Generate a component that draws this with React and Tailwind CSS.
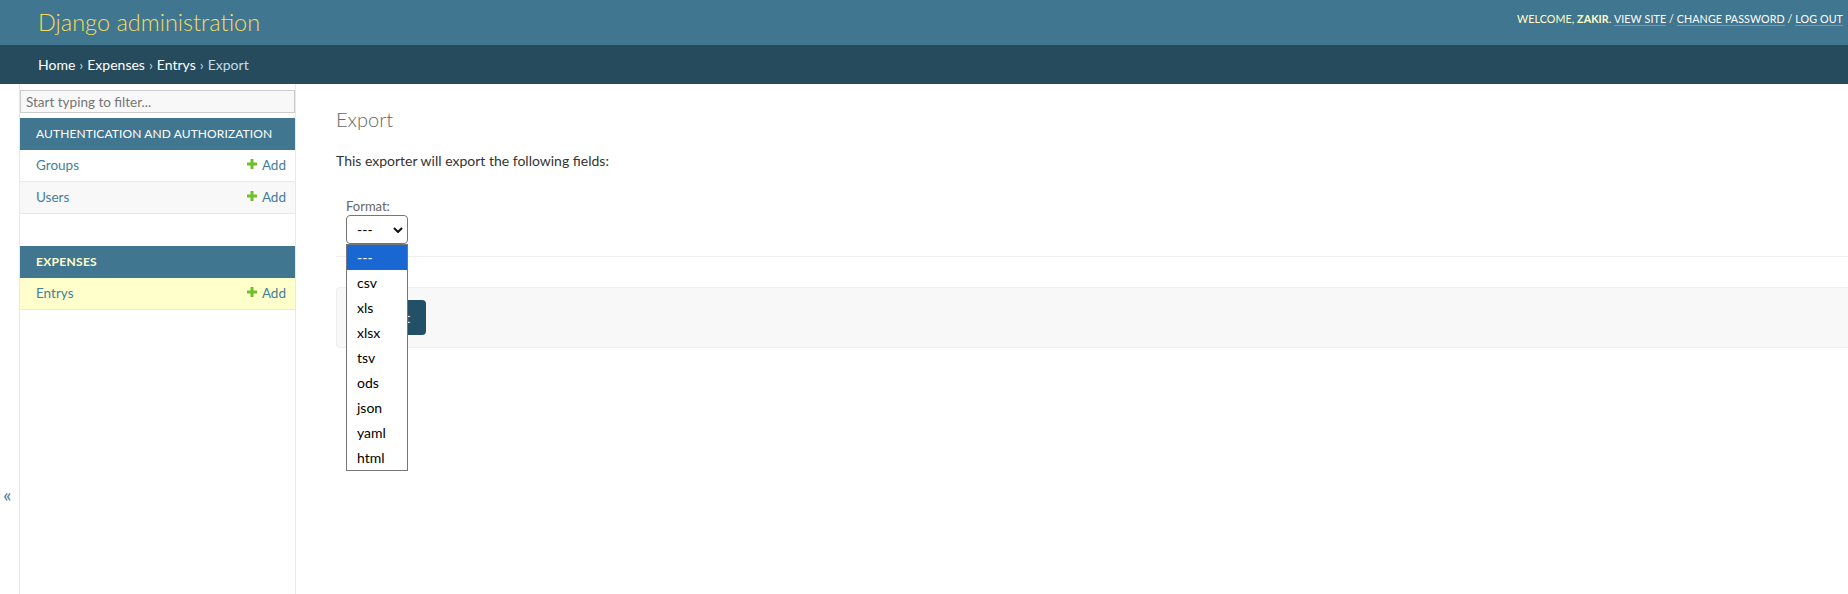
import { useState } from "react";

const formats = ["---", "csv", "xls", "xlsx", "tsv", "ods", "json", "yaml", "html"];

function PlusIcon() {
  return (
    <svg width="10" height="10" viewBox="0 0 10 10" className="mr-[5px] -mt-[3px]">
      <rect x="3.5" y="0" width="3" height="10" fill="#70bf2b" />
      <rect x="0" y="3.5" width="10" height="3" fill="#70bf2b" />
    </svg>
  );
}

function ModelRow({ name, current, even }) {
  return (
    <div
      className={`flex items-center justify-between h-[32px] pl-[16px] pr-[9px] border-b border-[#e8e8e8] text-[13.5px] ${
        current ? "bg-[#ffffcc]" : even ? "bg-[#f8f8f8]" : "bg-white"
      }`}
    >
      <a className="text-[#447e9b]">{name}</a>
      <a className="flex items-center text-[#447e9b]">
        <PlusIcon />
        Add
      </a>
    </div>
  );
}

function App() {
  const [selected] = useState("---");

  return (
    <div className="min-h-screen bg-white text-[#333] font-['Lato','Open_Sans',sans-serif] overflow-hidden">
      {/* Header */}
      <header className="flex items-center justify-between h-[45px] bg-[#417690] pl-[38px] pr-[5px]">
        <h1 className="text-[23.5px] font-light text-[#f5dd5d] leading-none">Django administration</h1>
        <div className="text-[10.7px] uppercase tracking-[0.1px] text-[#ffffcc] -mt-[6px] whitespace-nowrap">
          Welcome, <strong className="font-bold">zakir</strong>.{" "}
          <a className="text-white border-b border-white/25">View site</a> /{" "}
          <a className="text-white border-b border-white/25">Change password</a> /{" "}
          <a className="text-white border-b border-white/25">Log out</a>
        </div>
      </header>

      {/* Breadcrumbs */}
      <div className="flex items-center h-[39px] bg-[#264b5d] pl-[38px] text-[14px] text-[#c4dce8]">
        <a className="text-white">Home</a>
        <span className="mx-[4px]">›</span>
        <a className="text-white">Expenses</a>
        <span className="mx-[4px]">›</span>
        <a className="text-white">Entrys</a>
        <span className="mx-[4px]">›</span>
        <span>Export</span>
      </div>

      <div className="flex min-h-[510px]">
        {/* Sidebar toggle */}
        <div className="w-[20px] shrink-0 border-r border-[#e8e8e8] pt-[400px] pl-[3px]">
          <span className="text-[20px] leading-none text-[#447e9b]">«</span>
        </div>

        {/* Sidebar */}
        <nav className="w-[276px] shrink-0 border-r border-[#e8e8e8]">
          <input
            placeholder="Start typing to filter..."
            className="block w-[275px] h-[23px] mt-[6px] px-[5px] bg-[#f8f8f8] border border-[#ccc] text-[13.5px] placeholder:text-[#757575] outline-none"
          />
          <div className="mt-[5px]">
            <div className="flex items-center h-[32px] pl-[16px] bg-[#417690] text-white text-[12px] uppercase tracking-[0.1px] whitespace-nowrap">
              Authentication and Authorization
            </div>
            <ModelRow name="Groups" />
            <ModelRow name="Users" even />
          </div>
          <div className="mt-[32px]">
            <div className="flex items-center h-[32px] pl-[16px] bg-[#417690] text-[#ffffcc] font-bold text-[12px] uppercase tracking-[0.3px]">
              Expenses
            </div>
            <ModelRow name="Entrys" current />
          </div>
        </nav>

        {/* Content */}
        <main className="flex-1 pl-[40px] pt-[23px]">
          <h1 className="text-[20px] font-light text-[#666] leading-[24px] mb-[20px]">Export</h1>
          <p className="text-[14px] leading-[20px]">This exporter will export the following fields:</p>

          <div className="mt-[27px] pl-[10px] pb-[12px] border-b border-[#eee]">
            <label className="block text-[13px] leading-[16px] text-[#666]">Format:</label>
            <div className="relative mt-[1px] w-[62px]">
              <div className="flex items-center justify-between h-[29px] pl-[10px] pr-[4px] border border-[#767676] rounded-[4px] bg-white text-[14px] text-black">
                <span>{selected}</span>
                <svg width="10" height="6" viewBox="0 0 10 6">
                  <path d="M1 1 L5 5 L9 1" fill="none" stroke="#111" strokeWidth="2" />
                </svg>
              </div>

              {/* Open dropdown list */}
              <ul className="absolute left-0 top-[29px] z-10 w-[62px] border border-[#767676] bg-white text-[14px] text-black">
                {formats.map((f, i) => (
                  <li
                    key={f}
                    className={`h-[25px] pl-[10px] flex items-center ${i === 0 ? "bg-[#1967d2] text-white" : ""}`}
                  >
                    {f}
                  </li>
                ))}
              </ul>
            </div>
          </div>

          <div className="mt-[30px] h-[61px] flex items-center pl-[14px] bg-[#f8f8f8] border border-r-0 border-[#eee] rounded-l-[4px]">
            <button className="h-[35px] px-[16px] rounded-[4px] bg-[#225066] text-white text-[14px]">Submit</button>
          </div>
        </main>
      </div>
    </div>
  );
}

export default App;
